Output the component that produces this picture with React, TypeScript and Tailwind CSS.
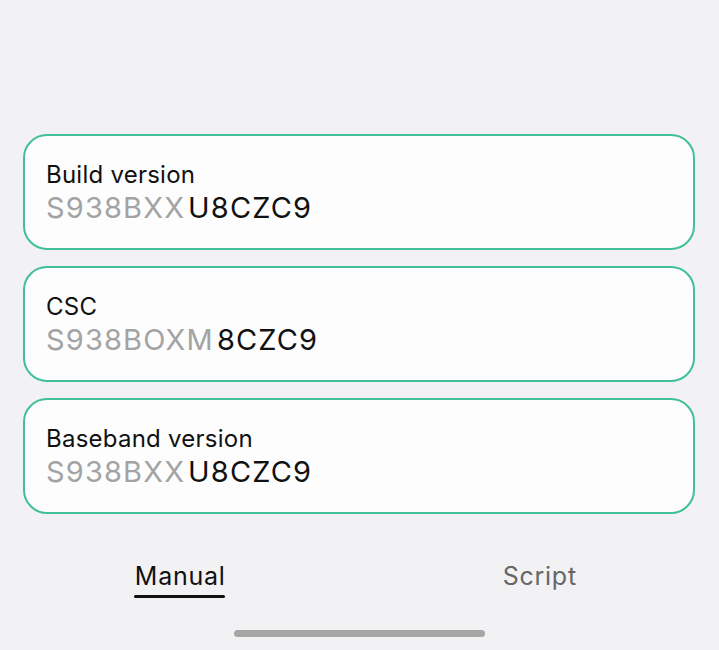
import React from 'react'

const rows = [
  { label: 'Build version', dim: 'S938BXX', value: 'U8CZC9' },
  { label: 'CSC', dim: 'S938BOXM', value: '8CZC9' },
  { label: 'Baseband version', dim: 'S938BXX', value: 'U8CZC9' },
]

export default function App() {
  return (
    <div
      className="w-[719px] h-[650px] bg-[#f2f2f4] flex flex-col overflow-hidden"
      style={{ fontFamily: 'Inter, "Noto Sans", sans-serif' }}
    >
      <div className="pt-[134px] pl-[23px] pr-[24px] flex flex-col gap-[16px]">
        {rows.map(r => (
          <div
            key={r.label}
            className="h-[116px] bg-[#fdfdfe] border-2 border-[#3fbf9a] rounded-[24px] pl-[21px] pt-[24px]"
          >
            <div className="text-[24px] leading-[30px] text-[#111] tracking-[0.01em]">{r.label}</div>
            <div className="text-[29px] leading-[36px] tracking-[0.04em] flex">
              <span className="text-[#a3a3a3]">{r.dim}</span>
              <span className="text-[#111] ml-[3px]">{r.value}</span>
            </div>
          </div>
        ))}
      </div>

      <div className="flex mt-[47px]">
        <div className="w-1/2 flex flex-col items-center">
          <div className="text-[25px] leading-[30px] text-[#111] tracking-[0.03em] pl-[1px]">Manual</div>
          <div className="w-[91px] h-[3px] rounded-full bg-[#111] mt-[4px]" />
        </div>
        <div className="w-1/2 flex flex-col items-center">
          <div className="text-[25px] leading-[30px] text-[#666] tracking-[0.03em] ml-[1px]">Script</div>
        </div>
      </div>

      <div className="flex justify-center mt-[32px]">
        <div className="w-[251px] h-[7px] rounded-full bg-[#a6a6a6]" />
      </div>
    </div>
  )
}
